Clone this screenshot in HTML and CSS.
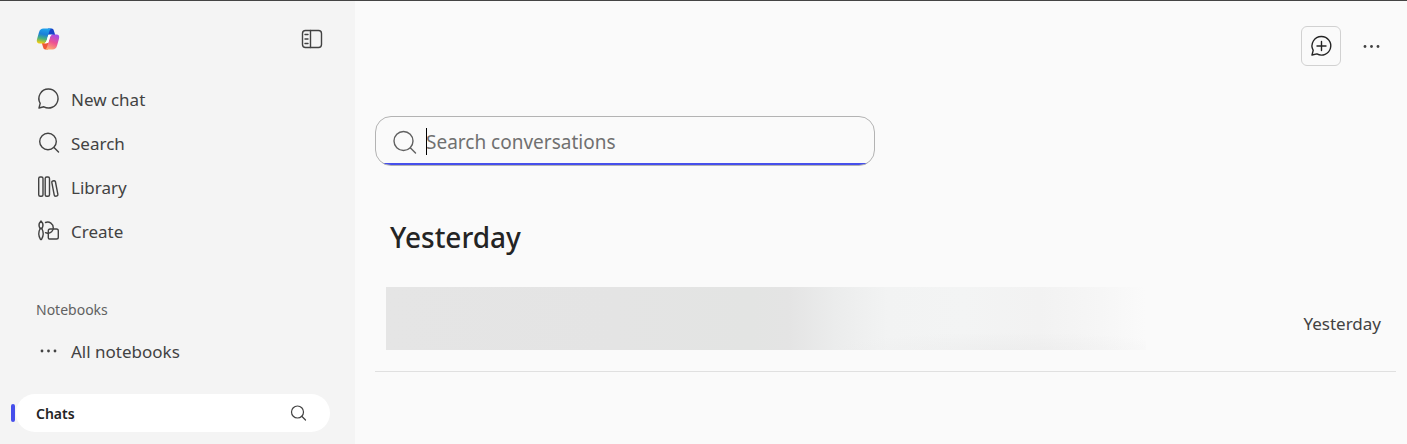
FILE: index.html
```html
<!DOCTYPE html>
<html lang="en">
<head>
    <meta charset="UTF-8">
    <meta name="viewport" content="width=device-width, initial-scale=1.0">
    <title>Chats</title>
    <link rel="stylesheet" href="styles.css">
</head>
<body>
    <div class="app">
        <aside class="sidebar">
            <div class="sidebar-header">
                <a class="logo" href="#" aria-label="Home">
                    <svg width="24" height="24" viewBox="0 0 24 24">
                        <defs>
                            <linearGradient id="logo-left" x1="0.6" y1="0" x2="0.4" y2="1">
                                <stop offset="0" stop-color="#1fa4ee"/>
                                <stop offset="0.4" stop-color="#1b7fd8"/>
                                <stop offset="0.7" stop-color="#4bb27c"/>
                                <stop offset="1" stop-color="#f0cc10"/>
                            </linearGradient>
                            <linearGradient id="logo-right" x1="0.7" y1="0" x2="0.3" y2="1">
                                <stop offset="0" stop-color="#a24ee8"/>
                                <stop offset="0.5" stop-color="#ee5191"/>
                                <stop offset="1" stop-color="#ffae6e"/>
                            </linearGradient>
                        </defs>
                        <path d="M12 1.500h3.500c1.300 0 2 .8 2.400 2.200l1.300 4.300H11z" fill="#1744c9"/>
                        <path d="M12 22.500H9.500c-1.300 0-2-.8-2.400-2.200L5.800 16H13z" fill="#ee5637"/>
                        <path d="M7.500 1.500h8.300c-1.300.3-1.900 1.200-2.400 2.800l-2.700 9c-.7 2.200-1.700 3.200-3.900 3.200H3.600c-2.400 0-3.300-1.600-2.600-4.200l2-7C3.700 2.700 5.200 1.500 7.500 1.500z" fill="url(#logo-left)"/>
                        <path d="M16.500 22.500H8.700c1.300-.3 1.900-1.200 2.400-2.800l2.700-9c.7-2.200 1.700-3.200 3.900-3.200h2.700c2.400 0 3.300 1.600 2.600 4.200l-2 7c-.7 2.600-2.200 3.800-4.500 3.800z" fill="url(#logo-right)"/>
                        <path d="M12.500 7.500h5c-2.100.1-3.100 1.100-3.700 3.200l-.9 3c-.5 1.700-1.400 2.600-3 2.800H7.400c1.900-.2 2.800-1.300 3.400-3.200z" fill="#fff"/>
                    </svg>
                </a>
                <button class="icon-button" type="button" aria-label="Collapse sidebar">
                    <svg class="icon" width="22" height="20" viewBox="0 0 22 20">
                        <rect x="1.500" y="1.500" width="19" height="17" rx="3"/>
                        <path d="M9.500 1.500v17M4 5.500h3M4 10h3M4 14.500h3"/>
                    </svg>
                </button>
            </div>

            <nav class="nav">
                <a class="nav-item" href="#">
                    <svg class="icon" width="24" height="24" viewBox="0 0 24 24">
                        <path d="M12.500 2a9.500 9.500 0 1 1-4.600 17.800L3 21l1.200-4.700A9.500 9.500 0 0 1 12.500 2z"/>
                    </svg>
                    New chat
                </a>
                <a class="nav-item" href="#">
                    <svg class="icon" width="24" height="24" viewBox="0 0 24 24">
                        <circle cx="12" cy="10.500" r="8.300"/>
                        <path d="M18 16.500l4.500 4.500"/>
                    </svg>
                    Search
                </a>
                <a class="nav-item" href="#">
                    <svg class="icon" width="24" height="24" viewBox="0 0 24 24">
                        <rect x="2.700" y="2" width="4.300" height="19.300" rx="1.500"/>
                        <rect x="9.200" y="2" width="4.300" height="19.300" rx="1.500"/>
                        <rect x="17" y="5.700" width="3.700" height="15.500" rx="1.300" transform="rotate(-11 18.800 13.500)"/>
                    </svg>
                    Library
                </a>
                <a class="nav-item" href="#">
                    <svg class="icon" width="24" height="24" viewBox="0 0 24 24">
                        <path d="M5 2c2.500 2.600 2.500 5 .8 7.500H4.200C2.500 7 2.500 4.600 5 2z"/>
                        <path d="M4.200 9.500h1.600c2 3.500 2 7-.3 11h-1c-2.300-4-2.300-7.500-.3-11z"/>
                        <path d="M9.500 3.500c4-1.500 7.800 1.500 7.800 5.500 0 3-2.600 5.200-5.500 5.200-.9 0-1.600-.2-2.300-.5"/>
                        <path d="M13.500 20h7a1.800 1.800 0 0 0 1.800-1.800v-6.400a1.800 1.800 0 0 0-1.800-1.800h-6.400a1.800 1.800 0 0 0-1.800 1.800v7c0 .7.500 1.200 1.200 1.200z"/>
                    </svg>
                    Create
                </a>
            </nav>

            <h2 class="section-title">Notebooks</h2>
            <a class="nav-item" href="#">
                <svg class="dots" width="24" height="24" viewBox="0 0 24 24">
                    <circle cx="6" cy="12" r="1.400"/>
                    <circle cx="12.500" cy="12" r="1.400"/>
                    <circle cx="19" cy="12" r="1.400"/>
                </svg>
                All notebooks
            </a>

            <div class="chats">
                <a class="chats-link" href="#">Chats</a>
                <button class="icon-button" type="button" aria-label="Search chats">
                    <svg class="icon icon-small" width="18" height="18" viewBox="0 0 18 18">
                        <circle cx="7.500" cy="8" r="6"/>
                        <path d="M12 12.500l3.500 3.500"/>
                    </svg>
                </button>
            </div>
        </aside>

        <main class="main">
            <div class="toolbar">
                <button class="new-chat" type="button" aria-label="New chat">
                    <svg class="icon" width="24" height="24" viewBox="0 0 24 24">
                        <path d="M12.500 2.500a9.300 9.300 0 1 1-4.600 17.400L3 21l1.200-4.700A9.300 9.300 0 0 1 12.500 2.500zM12.500 7.500v9M8 12h9"/>
                    </svg>
                </button>
                <button class="icon-button" type="button" aria-label="More options">
                    <svg class="dots" width="24" height="24" viewBox="0 0 24 24">
                        <circle cx="6" cy="12.500" r="1.400"/>
                        <circle cx="12.500" cy="12.500" r="1.400"/>
                        <circle cx="19" cy="12.500" r="1.400"/>
                    </svg>
                </button>
            </div>

            <label class="search-box">
                <svg class="icon" width="26" height="26" viewBox="0 0 26 26">
                    <circle cx="11.500" cy="12" r="9.500"/>
                    <path d="M18.500 19l5 5"/>
                </svg>
                <span class="search-field">
                    <input class="search-input" type="text" placeholder="Search conversations" aria-label="Search conversations">
                    <span class="caret"></span>
                </span>
            </label>

            <h1 class="group-title">Yesterday</h1>
            <ul class="chat-list">
                <li class="chat-row">
                    <div class="chat-name"></div>
                    <span class="chat-date">Yesterday</span>
                </li>
            </ul>
        </main>
    </div>
</body>
</html>
```

FILE: styles.css
```css
* {
    box-sizing: border-box;
}

body {
    margin: 0;
    font-family: "Noto Sans", "Open Sans", sans-serif;
    font-size: 17px;
    color: #424242;
    background-color: #fafafa;
}

a {
    color: inherit;
    text-decoration: none;
}

button {
    padding: 0;
    border: none;
    background: none;
    color: inherit;
    cursor: pointer;
}

svg {
    display: block;
    flex-shrink: 0;
}

.app {
    display: flex;
    min-height: 100vh;
    border-top: 1px solid #444;
}

.icon {
    fill: none;
    stroke: currentColor;
    stroke-width: 1.4;
    stroke-linecap: round;
    stroke-linejoin: round;
}

.icon-small {
    stroke-width: 1.2;
}

.dots {
    fill: currentColor;
}

/* Sidebar */
.sidebar {
    width: 355px;
    flex-shrink: 0;
    padding: 26px 25px 11px 16px;
    background-color: #f4f4f4;
}

.sidebar-header {
    display: flex;
    align-items: center;
    justify-content: space-between;
    height: 24px;
    padding: 0 7px 0 20px;
    margin-bottom: 26px;
}

.nav-item {
    display: flex;
    align-items: center;
    gap: 11px;
    height: 44px;
    padding-left: 20px;
}

.section-title {
    margin: 47px 0 9px;
    padding-left: 20px;
    font-size: 14px;
    font-weight: 400;
    line-height: 20px;
    color: #616161;
}

.chats {
    position: relative;
    display: flex;
    align-items: center;
    justify-content: space-between;
    height: 38px;
    margin-top: 21px;
    padding: 0 22px 0 20px;
    border-radius: 19px;
    background-color: #fff;
}

.chats::before {
    content: "";
    position: absolute;
    left: -5px;
    top: 10px;
    width: 4px;
    height: 18px;
    border-radius: 2px;
    background-color: #464feb;
}

.chats-link {
    font-size: 14px;
    font-weight: 600;
    color: #242424;
}

/* Main area */
.main {
    flex: 1;
    padding: 25px 11px 0 20px;
}

.toolbar {
    display: flex;
    align-items: center;
    justify-content: flex-end;
    gap: 18px;
    padding-right: 13px;
    margin-bottom: 50px;
}

.new-chat {
    display: flex;
    align-items: center;
    justify-content: center;
    width: 40px;
    height: 40px;
    border: 1px solid #d1d1d1;
    border-radius: 6px;
    color: #242424;
}

.search-box {
    display: flex;
    align-items: center;
    gap: 8px;
    max-width: 500px;
    height: 50px;
    padding: 1px 16px 0;
    border: 1px solid #b3b3b3;
    border-radius: 16px;
    background: linear-gradient(#464feb, #464feb) bottom / 100% 2px no-repeat;
    color: #616161;
}

.search-field {
    position: relative;
    flex: 1;
}

.search-input {
    display: block;
    width: 100%;
    padding: 0;
    border: none;
    outline: none;
    background: none;
    font-family: inherit;
    font-size: 19px;
    line-height: 28px;
    color: #242424;
}

.search-input::placeholder {
    color: #707070;
}

.caret {
    position: absolute;
    left: 0;
    top: 0;
    width: 1px;
    height: 27px;
    background-color: #000;
}

.group-title {
    margin: 51px 0 0;
    padding-left: 15px;
    font-size: 28px;
    font-weight: 500;
    line-height: 40px;
    color: #242424;
}

.chat-list {
    margin: 0;
    padding: 0;
    list-style: none;
}

.chat-row {
    display: flex;
    align-items: center;
    justify-content: space-between;
    margin-top: 30px;
    padding: 0 15px 21px 11px;
    border-bottom: 1px solid #e0e0e0;
}

/* Blurred conversation name */
.chat-name {
    flex: 0 1 760px;
    height: 63px;
    background:
        radial-gradient(ellipse at 82% 100%, rgba(230, 230, 230, 0.4), transparent 20%),
        linear-gradient(90deg, #e5e5e5 0%, #e4e4e4 30%, #e3e4e3 48%, #e4e4e4 53%, #ebecec 59%, #f2f3f3 66%, #f3f4f4 76%, #f2f2f2 86%, #f6f6f6 94%, #fafafa 100%);
}

.chat-date {
    line-height: 24px;
    padding-top: 10px;
}
```
